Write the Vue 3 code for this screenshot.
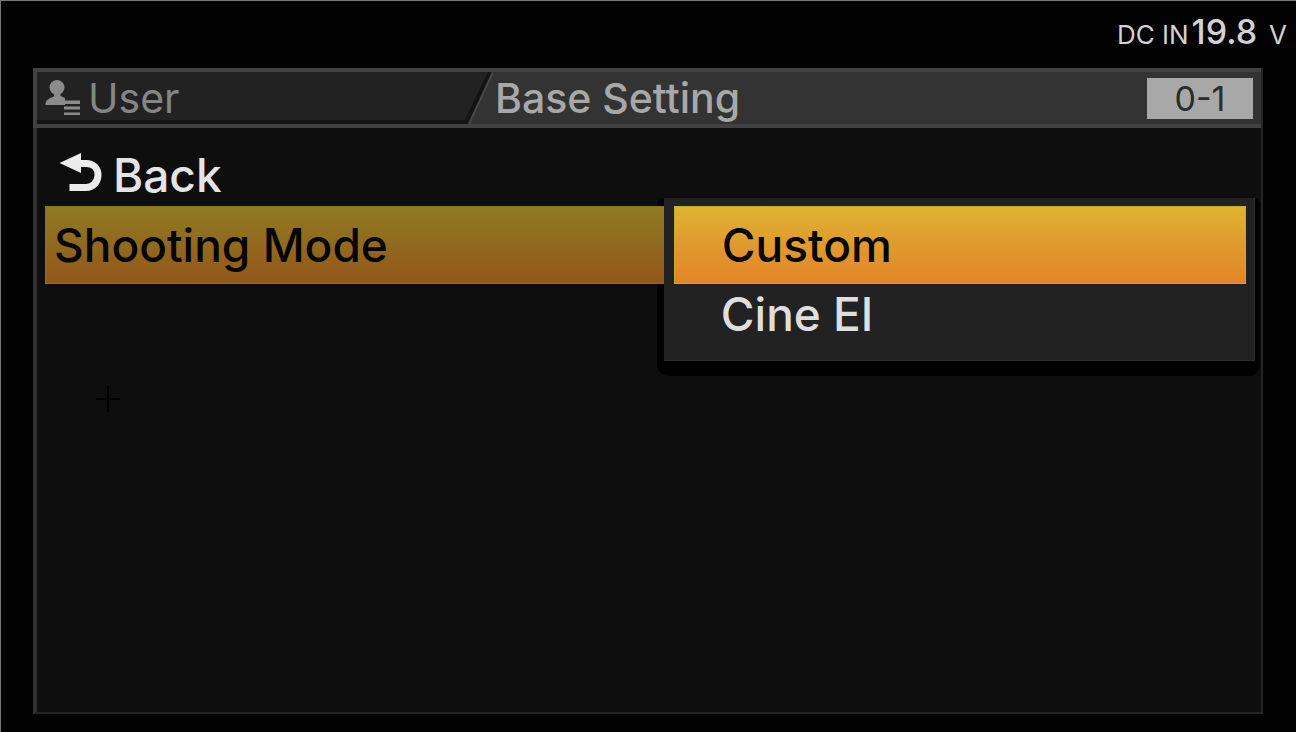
<script setup>
import { ref } from 'vue'

const modes = ['Custom', 'Cine EI']
const selected = ref('Custom')
</script>

<template>
  <main class="screen">
    <div class="status">
      <span class="source">DC IN</span>
      <span class="volts">19.8</span>
      <span class="unit">V</span>
    </div>

    <section class="panel">
      <header class="header">
        <div class="crumb">
          <svg class="crumb-shape" viewBox="0 0 456 51" preserveAspectRatio="none" aria-hidden="true">
            <path d="M0 0H456L432 51H0Z" fill="#141414" />
            <path d="M0 0H451L428 47H0Z" fill="#222222" />
            <path d="M456 0L432 51" stroke="#484848" stroke-width="2" />
          </svg>
          <svg class="user-icon" viewBox="0 0 38 38" aria-hidden="true">
            <g fill="#8b8b8b">
              <ellipse cx="12" cy="8.500" rx="7.500" ry="7.500" />
              <path d="M9 14H15.500V17L20 19V26H0.500C0.500 21.500 3 19.500 9 17.500Z" />
              <path d="M19 21.500H35V25H19Z M19 27.500H35V30.500H19Z M19 33.500H35V36H19Z" />
            </g>
          </svg>
          <span class="crumb-text">User</span>
        </div>
        <h1 class="title">Base Setting</h1>
        <span class="page">0-1</span>
      </header>

      <div class="content">
        <button class="back" type="button">
          <svg class="back-icon" viewBox="0 0 44 40" aria-hidden="true">
            <path d="M0.500 10L22 0V20Z" fill="#ececec" />
            <path d="M20 10.500H27C34.500 10.500 39 15.500 39 22S34.500 34.500 27 34.500H10.500" fill="none" stroke="#ececec" stroke-width="7" />
          </svg>
          <span>Back</span>
        </button>
        <button class="setting" type="button" aria-haspopup="listbox" aria-expanded="true">Shooting Mode</button>
        <div class="menu" role="listbox" aria-label="Shooting Mode">
          <button
            v-for="mode in modes"
            :key="mode"
            type="button"
            role="option"
            class="option"
            :class="{ active: mode === selected }"
            :aria-selected="mode === selected"
            @click="selected = mode"
          >{{ mode }}</button>
        </div>
        <svg class="cursor" viewBox="0 0 24 26" aria-hidden="true">
          <path d="M12 0V26M0 13H24" stroke="#000000" stroke-width="2" />
        </svg>
      </div>
    </section>
  </main>
</template>

<style>
body {
  margin: 0;
  background: #020203;
}
</style>

<style scoped>
.screen {
  box-sizing: border-box;
  display: flex;
  flex-direction: column;
  min-height: 100vh;
  padding: 0 33px 18px 32px;
  border-top: 1px solid #777777;
  border-left: 1px solid #777777;
  background: #020203;
  color: #dedede;
  font-family: Inter, "Liberation Sans", Arial, sans-serif;
}

.status {
  display: flex;
  justify-content: flex-end;
  align-items: baseline;
  height: 67px;
  margin-right: -24px;
  line-height: 62px;
  color: #d2d2d2;
}

.source {
  font-size: 26px;
}

.volts {
  margin-left: 3px;
  font-size: 34px;
  font-weight: 500;
}

.unit {
  margin-left: 12px;
  font-size: 26px;
}

.panel {
  flex: 1;
  display: flex;
  flex-direction: column;
  border: 2px solid #242424;
  border-left: 4px solid #303030;
  border-top: 0;
  background: #0e0e0e;
}

.header {
  display: flex;
  align-items: center;
  box-sizing: border-box;
  height: 60px;
  margin: 0 0 0 -4px;
  padding-right: 8px;
  border: 4px solid #424242;
  border-right: 0;
  background: #333333;
}

.crumb {
  position: relative;
  display: flex;
  align-items: center;
  align-self: stretch;
  box-sizing: border-box;
  width: 37.5%;
  padding-left: 8px;
}

.crumb-shape {
  position: absolute;
  inset: 0;
  width: 100%;
  height: 100%;
}

.user-icon {
  position: relative;
  width: 38px;
  height: 38px;
}

.crumb-text {
  position: relative;
  margin-left: 5px;
  color: #858585;
  font-size: 41px;
  line-height: 48px;
}

.title {
  flex: 1;
  margin: 0;
  padding-left: 2px;
  color: #a8a8a8;
  font-size: 41px;
  font-weight: 500;
  line-height: 48px;
}

.page {
  width: 106px;
  background: #a8a8a8;
  color: #2c2c2c;
  font-size: 34px;
  line-height: 41px;
  text-align: center;
}

.content {
  position: relative;
  isolation: isolate;
  flex: 1;
  padding: 10px 8px;
}

button {
  box-sizing: border-box;
  display: flex;
  align-items: center;
  width: 100%;
  margin: 0;
  border: 0;
  background: none;
  color: inherit;
  font-family: inherit;
  font-size: 46px;
  font-weight: 500;
  line-height: 56px;
  text-align: left;
  cursor: pointer;
}

.back {
  height: 68px;
  padding: 6px 14px 0;
  color: #e4e4e4;
}

.back-icon {
  width: 44px;
  height: 40px;
  margin: 0 10px 4px 0;
}

.setting {
  height: 78px;
  padding: 0 8px;
  border: 1px solid #837719;
  background: linear-gradient(#8f7a22, #91691f 50%, #935719);
  color: #050505;
}

.menu {
  position: absolute;
  top: 70px;
  right: 6px;
  box-sizing: border-box;
  width: 48.3%;
  padding: 8px 8px 16px 10px;
  border-right: 1px solid #303030;
  border-bottom: 1px solid #2c2c2c;
  background: #222222;
}

.menu::before {
  content: "";
  position: absolute;
  z-index: -1;
  inset: 0 -6px -16px -7px;
  border-radius: 6px 6px 12px 12px;
  background: #010101;
}

.option {
  height: 60px;
  padding: 0 47px;
}

.option.active {
  height: 78px;
  border: 1px solid #c4ac24;
  background: linear-gradient(#dfb431, #e09a2e 50%, #e38527);
  color: #050505;
}

.cursor {
  position: absolute;
  top: 258px;
  left: 59px;
  width: 24px;
  height: 26px;
}
</style>
